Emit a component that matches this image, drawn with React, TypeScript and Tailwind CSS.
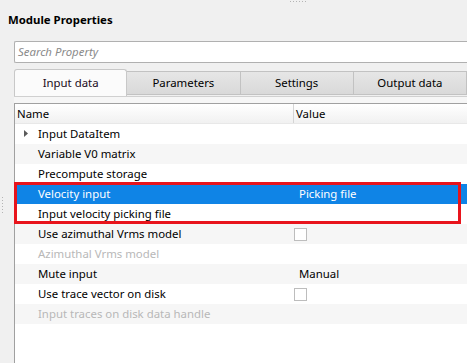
import React from "react";

type Row = {
  label: string;
  value?: string;
  checkbox?: boolean;
  disabled?: boolean;
  expandable?: boolean;
  selected?: boolean;
};

const rows: Row[] = [
  { label: "Input DataItem", expandable: true },
  { label: "Variable V0 matrix" },
  { label: "Precompute storage" },
  { label: "Velocity input", value: "Picking file", selected: true },
  { label: "Input velocity picking file" },
  { label: "Use azimuthal Vrms model", checkbox: true },
  { label: "Azimuthal Vrms model", disabled: true },
  { label: "Mute input", value: "Manual" },
  { label: "Use trace vector on disk", checkbox: true },
  { label: "Input traces on disk data handle", disabled: true },
];

const tabs = ["Input data", "Parameters", "Settings", "Output data"];

function Dots({ vertical }: { vertical?: boolean }) {
  return (
    <div className={vertical ? "flex flex-col gap-[2px]" : "flex gap-[2px]"}>
      {[0, 1, 2, 3, 4, 5].map((i) => (
        <div key={i} className="w-[1px] h-[1px] bg-[#b4b4b4]" />
      ))}
    </div>
  );
}

export default function App() {
  return (
    <div
      className="relative w-[467px] h-[363px] bg-[#f0f0f0] overflow-hidden text-[11.4px] text-black"
      style={{ fontFamily: '"Noto Sans", "Open Sans", sans-serif' }}
    >
      {/* splitter handles */}
      <div className="absolute top-[1px] left-[290px]">
        <Dots />
      </div>
      <div className="absolute top-[197px] left-[2px]">
        <Dots vertical />
      </div>

      <div className="pl-[8px] pt-[11px] h-[41px] font-bold leading-[17px]">
        Module Properties
      </div>

      {/* search box */}
      <div className="ml-[14px] h-[22px] bg-white border border-r-0 border-[#b0b0b0] rounded-l-[2px] flex items-center pl-[3px]">
        <span className="italic text-[#8a8a8a] leading-none">Search Property</span>
      </div>

      {/* tabs */}
      <div className="ml-[14px] mt-[6px] h-[27px] flex items-end">
        {tabs.map((t, i) =>
          i === 0 ? (
            <div
              key={t}
              className="w-[114px] h-[27px] bg-[#fbfbfb] border border-b-0 border-[#c8c8c8] rounded-t-[3px] flex items-center justify-center text-[#1a0a1a]"
            >
              {t}
            </div>
          ) : (
            <div
              key={t}
              className="w-[114px] h-[24px] mb-[1px] bg-gradient-to-b from-[#e6e6e6] to-[#d9d9d9] border border-l-0 border-[#c2c2c2] flex items-center justify-center"
            >
              {t}
            </div>
          )
        )}
      </div>
      <div className="ml-[14px] h-[7px] border-t border-[#d0d0d0] bg-[#f6f6f6]" />

      {/* property table */}
      <div className="relative ml-[14px] h-[261px] bg-white border-l border-t border-[#a0a0a0]">
        <div className="flex h-[20px] bg-gradient-to-b from-white to-[#f1f1f1] border-b border-[#e8e8e8] leading-[19px]">
          <div className="w-[279px] pl-[2px] border-r border-[#d5d5d5]">Name</div>
          <div className="pl-[2px]">Value</div>
        </div>
        {rows.map((r, i) => (
          <div
            key={r.label}
            className={
              "flex h-[20px] items-center " +
              (r.selected ? "bg-[#0f84e6] text-white" : i % 2 === 1 ? "bg-[#f6f6f6]" : "bg-white")
            }
          >
            <div className="w-[279px] flex items-center">
              <div className="w-[23px] flex justify-end pr-[10px]">
                {r.expandable && (
                  <svg width="4" height="7" viewBox="0 0 4 7">
                    <path d="M0 0 L4 3.5 L0 7 Z" fill="#5a5a5a" />
                  </svg>
                )}
              </div>
              <span className={r.disabled ? "text-[#b8b8b8]" : ""}>{r.label}</span>
            </div>
            <div className="flex items-center">
              {r.value && <span className="pl-[5px]">{r.value}</span>}
              {r.checkbox && (
                <div className="w-[13px] h-[13px] bg-white border border-[#bdbdbd]" />
              )}
            </div>
          </div>
        ))}

        {/* highlight box */}
        <div className="absolute left-[-1px] top-[78px] w-[447px] h-[42px] border-[3px] border-[#e8141c]" />
      </div>
    </div>
  );
}
